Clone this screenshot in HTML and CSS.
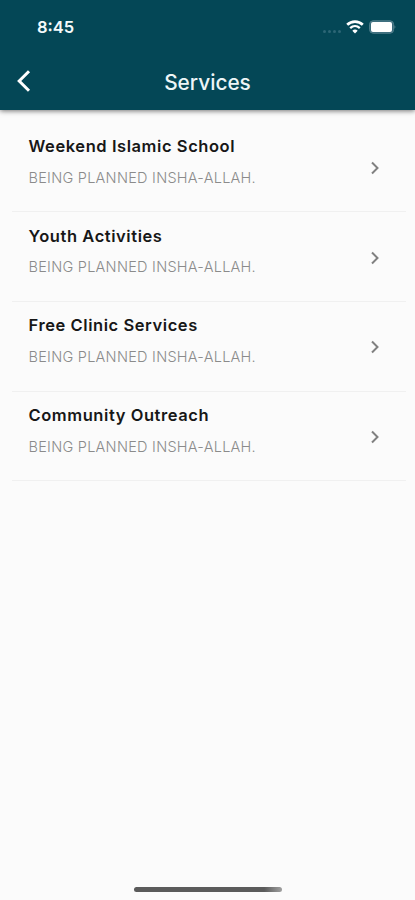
FILE: index.html
```
<!DOCTYPE html>
<html lang="en">
<head>
<meta charset="utf-8">
<title>Services</title>
<link rel="stylesheet" href="styles.css">
</head>
<body>
<div class="screen">
  <header class="header">
    <div class="status">
      <span class="time">8:45</span>
      <div class="indicators">
        <span class="cell"><i></i><i></i><i></i><i></i></span>
        <svg class="wifi" width="18" height="14" viewBox="0 0 18 14" fill="none" stroke="#fff">
          <path d="M1.2 4.7C5.5.5 12.5.5 16.8 4.7" stroke-width="2.7"/>
          <path d="M4.2 8.1C7 5.5 11 5.5 13.8 8.1" stroke-width="2.3"/>
          <path d="M9 13.5L6.3 10.7Q9 8.5 11.7 10.7Z" fill="#fff" stroke="none"/>
        </svg>
        <svg class="battery" width="28" height="14" viewBox="0 0 28 14">
          <rect x=".6" y=".8" width="24" height="12.4" rx="3.5" fill="#37697a" stroke="#517f8c"/>
          <rect x="2" y="2" width="21" height="10" rx="2" fill="#fff"/>
          <path d="M25.6 5Q27.2 7 25.6 9Z" fill="#7b9ca5"/>
        </svg>
      </div>
    </div>
    <nav class="nav">
      <svg class="back" width="16" height="24" viewBox="0 0 16 24" fill="none" stroke="#fff" stroke-width="3"><path d="M14 2.2L4.2 12L14 21.8"/></svg>
      <h1 class="title">Services</h1>
    </nav>
  </header>
  <main class="list">
    <section class="row">
      <div class="copy"><h2 class="name">Weekend Islamic School</h2><p class="note">BEING PLANNED INSHA-ALLAH.</p></div>
      <svg class="chevron" width="10" height="14" viewBox="0 0 10 14"><path d="M2 1.5L7.5 7L2 12.5"/></svg>
    </section>
    <section class="row">
      <div class="copy"><h2 class="name">Youth Activities</h2><p class="note">BEING PLANNED INSHA-ALLAH.</p></div>
      <svg class="chevron" width="10" height="14" viewBox="0 0 10 14"><path d="M2 1.5L7.5 7L2 12.5"/></svg>
    </section>
    <section class="row">
      <div class="copy"><h2 class="name">Free Clinic Services</h2><p class="note">BEING PLANNED INSHA-ALLAH.</p></div>
      <svg class="chevron" width="10" height="14" viewBox="0 0 10 14"><path d="M2 1.5L7.5 7L2 12.5"/></svg>
    </section>
    <section class="row">
      <div class="copy"><h2 class="name">Community Outreach</h2><p class="note">BEING PLANNED INSHA-ALLAH.</p></div>
      <svg class="chevron" width="10" height="14" viewBox="0 0 10 14"><path d="M2 1.5L7.5 7L2 12.5"/></svg>
    </section>
  </main>
  <div class="home"></div>
</div>
</body>
</html>
```
FILE: styles.css
```
* { box-sizing: border-box; margin: 0; padding: 0; }
body { background: #fbfbfb; font-family: Inter, "Liberation Sans", sans-serif; }
.screen { height: 900px; display: flex; flex-direction: column; overflow: hidden; }
.header { height: 109.5px; flex: none; background: #044756; box-shadow: 0 1px 5px rgba(0,0,0,.55); }
.status { height: 54px; padding: 0 18px 0 37px; display: flex; align-items: center; justify-content: space-between; }
.time { color: #f4fafb; font-size: 16.5px; font-weight: 600; line-height: 20px; }
.indicators { display: flex; align-items: center; }
.cell { display: flex; gap: 2px; margin: 8px 5px 0 0; }
.cell i { width: 3px; height: 3px; border-radius: 50%; background: #2c6675; }
.wifi { margin-right: 5px; }
.nav { height: 56px; display: grid; grid-template-columns: 40px 1fr 40px; align-items: center; }
.back { margin: -3px 0 0 15px; }
.title { color: #edf5f7; font-size: 20.8px; font-weight: 500; line-height: 28px; text-align: center; padding-top: 2px; }
.list { padding: 13.3px 9px 0 12px; flex: 1; }
.row { height: 89.6px; padding: 12.3px 26px 0 16.5px; display: flex; justify-content: space-between; border-bottom: 1px solid #f0f0f0; }
.name { color: #171717; font-size: 16.5px; line-height: 22px; font-weight: 600; letter-spacing: .57px; white-space: nowrap; }
.note { color: #8b8b8b; font-size: 14.5px; line-height: 20px; font-weight: 300; letter-spacing: .26px; margin-top: 10.8px; white-space: nowrap; }
.chevron { margin-top: 26px; fill: none; stroke: #808080; stroke-width: 2; }
.home { width: 148px; height: 5.5px; border-radius: 3px; background: linear-gradient(90deg, #5b5b5b 88%, #a0a0a0); align-self: center; margin-bottom: 8px; }
```
